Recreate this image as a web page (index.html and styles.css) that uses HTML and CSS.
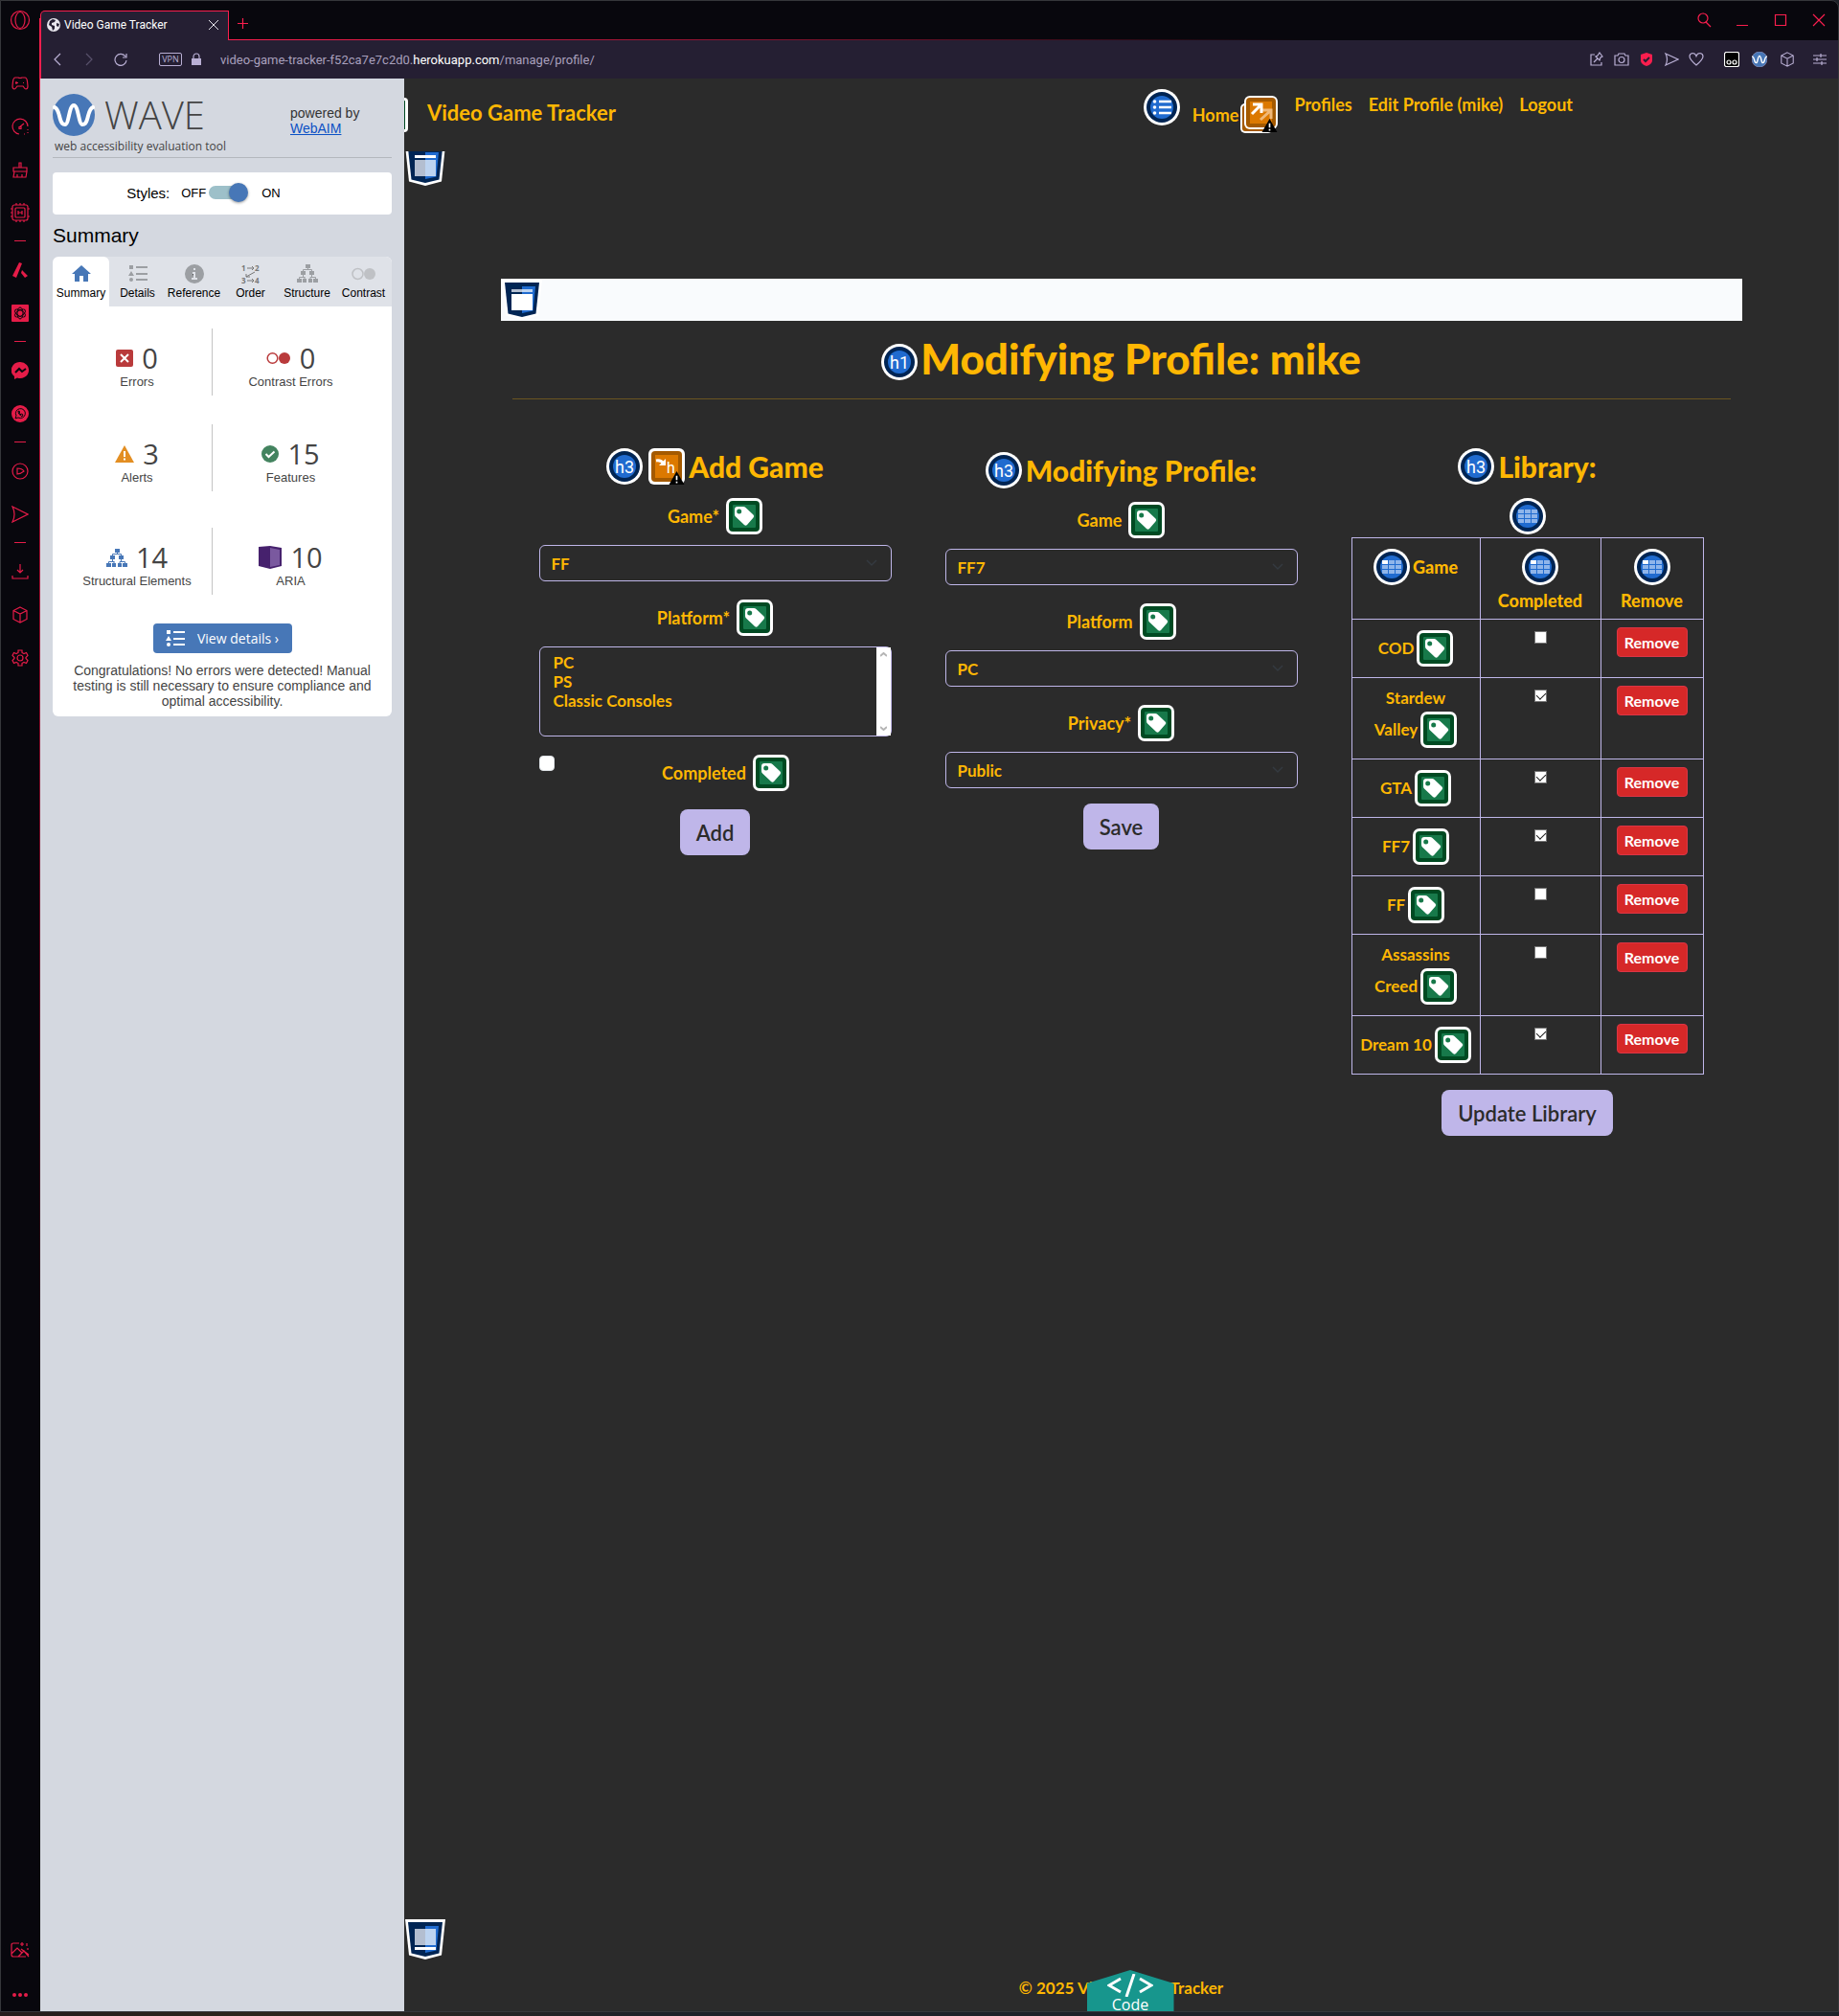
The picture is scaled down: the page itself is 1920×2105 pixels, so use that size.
FILE: index.html
```html
<!DOCTYPE html>
<html lang="en">
<head>
<meta charset="utf-8">
<meta name="viewport" content="width=device-width, initial-scale=1">
<title>Video Game Tracker</title>
<link rel="stylesheet" href="styles.css">
</head>
<body>
<svg class="sprite" aria-hidden="true">
  <symbol id="tag" viewBox="0 0 38 38"><rect width="38" height="38" rx="7" fill="#fff"/><rect x="3" y="3" width="32" height="32" rx="4" fill="#004a22"/><rect x="7" y="7" width="24" height="24" rx="1" fill="#17794a"/><path d="M9 12q0-3 3-3h6q1.500 0 2.500 1l8 7.500q1.500 1.500 0 3L22 28q-1.500 1.500-3 0l-9-8.500q-1-1-1-2.500z" fill="#fff"/><circle cx="13.700" cy="14" r="2.500" fill="#17794a"/></symbol>
  <symbol id="disc" viewBox="0 0 38 38"><circle cx="19" cy="19" r="19" fill="#fff"/><circle cx="19" cy="19" r="16" fill="#002554"/><circle cx="19" cy="19" r="12" fill="#206bcf"/></symbol>
  <symbol id="h1" viewBox="0 0 38 38"><use href="#disc"/><text x="19" y="26" text-anchor="middle" class="disc-text">h1</text></symbol>
  <symbol id="h3" viewBox="0 0 38 38"><use href="#disc"/><text x="19" y="26" text-anchor="middle" class="disc-text">h3</text></symbol>
  <symbol id="grid" viewBox="0 0 38 38"><use href="#disc"/><path fill="#8fb5ea" d="M9 12h6v4H9zM16 12h6v4h-6zM23 12h6v4h-6zM9 17h6v4H9zM16 17h6v4h-6zM23 17h6v4h-6zM9 22h6v4H9zM16 22h6v4h-6zM23 22h6v4h-6z"/></symbol>
  <symbol id="th" viewBox="0 0 38 38"><use href="#grid"/><path fill="#fff" d="M9 12h6v4H9z"/></symbol>
  <symbol id="listdisc" viewBox="0 0 38 38"><use href="#disc"/><path stroke="#fff" stroke-width="2.500" d="M16 13h13M16 19h13M16 25h13"/><g fill="#fff"><circle cx="11.500" cy="13" r="1.800"/><circle cx="11.500" cy="19" r="1.800"/><circle cx="11.500" cy="25" r="1.800"/></g></symbol>
  <symbol id="warn" viewBox="0 0 17 15"><path d="M8.500 0L17 15H0z" fill="#000"/><path d="M8.500 5v5M8.500 11.500v2" stroke="#fff" stroke-width="1.800"/></symbol>
  <symbol id="shield" viewBox="0 0 42 42"><path fill="#fff" d="M0 0h42l-4 37.500L21 42 4 37.500z"/><path fill="#002554" d="M3 3h36l-3.500 32.500L21 39 6.500 35.500z"/><path fill="#206bcf" d="M21 7h14l-2.500 25.500L21 35z"/></symbol>
  <symbol id="bullets" viewBox="0 0 20 18"><path fill="currentColor" d="M1 0h4v4H1zM3 6l3 5H0zM8 1h12v2H8zM8 8h12v2H8zM8 14h12v2H8z"/><circle cx="3" cy="15" r="2" fill="currentColor"/></symbol>
  <symbol id="tree" viewBox="0 0 22 19"><path fill="currentColor" d="M9 0h5v4H9zM4 7h5v4H4zM13 7h5v4h-5zM0 15h5v4H0zM6 15h4v4H6zM12 15h4v4h-4zM17 15h5v4h-5z"/><path fill="none" stroke="currentColor" d="M11.500 4v2M6.500 7V5.500h9V7M2.500 15v-1.500h6M6.500 11v2.500M8 15v-1.500M15.500 11v2.500M14 15v-1.500h5.500V15"/></symbol>
  <symbol id="wave" viewBox="0 0 44 44"><circle cx="22" cy="22" r="22" fill="#4777b7"/><path fill="none" stroke="#fff" stroke-width="4" stroke-linejoin="round" stroke-linecap="round" d="M2 14q3 1 5 9c2 9 4 9 6 9 4 0 4-20 9-20s5 20 9 20c2 0 4 0 6-9q2-8 5-9"/></symbol>
  <symbol id="cube" viewBox="0 0 18 18"><path d="M9 1l7 3.500v9L9 17l-7-3.500v-9zM2 4.500L9 8l7-3.500M9 8v9"/></symbol>
</svg>

<div class="window">
  <aside class="rail" aria-label="Browser sidebar">
    <button class="rail-btn rail-logo" aria-label="Menu"><svg class="line" width="22" height="22" viewBox="0 0 22 22"><circle cx="11" cy="11" r="9.500"/><ellipse cx="11" cy="11" rx="5" ry="8.500"/></svg></button>
    <button class="rail-btn" aria-label="Games"><svg class="line" width="18" height="16" viewBox="0 0 18 16"><path d="M4 2h3q2 1 4 0h3q2 0 2.500 4l.5 5q0 3-2 3-1 0-3-3H6q-2 3-3 3-2 0-2-3l.5-5Q2 2 4 2zM5 6v3M4 7.500h3M12 7.500h1"/></svg></button>
    <button class="rail-btn" aria-label="Performance"><svg class="line" width="18" height="18" viewBox="0 0 18 18"><path d="M8 17A8 8 0 1 1 17 9M8 10l5-4M8 9.500h2v2H8zM17 12v1M17 15v1M13 17h1"/></svg></button>
    <button class="rail-btn" aria-label="Cleaner"><svg class="line" width="18" height="18" viewBox="0 0 18 18"><path d="M8 7V2h2v5M2 7h14v4H2zM3 11l-1 6h13l1-6M6 14v3M11 14v3"/></svg></button>
    <button class="rail-btn" aria-label="Mods"><svg class="line" width="20" height="20" viewBox="0 0 20 20"><rect x="2" y="2" width="16" height="16" rx="2"/><rect x="5" y="5" width="10" height="10" rx="1"/><path d="M8 8v4M12 8v4M8 10h4M6 0v2M10 0v2M14 0v2M6 18v2M10 18v2M14 18v2M0 6h2M0 10h2M0 14h2M18 6h2M18 14h2"/></svg></button>
    <hr class="rail-dash">
    <button class="rail-btn" aria-label="Aria"><svg class="solid" width="18" height="18" viewBox="0 0 18 18"><path d="M8 1l3 1-6 15-4-2zM11 9l6 6-3 2-4-5z"/></svg></button>
    <button class="rail-btn" aria-label="ChatGPT"><svg width="18" height="18" viewBox="0 0 18 18"><rect width="18" height="18" rx="1" fill="#e51c48"/><g fill="none" stroke="#08070d"><ellipse cx="9" cy="9" rx="3" ry="6"/><ellipse cx="9" cy="9" rx="3" ry="6" transform="rotate(60 9 9)"/><ellipse cx="9" cy="9" rx="3" ry="6" transform="rotate(120 9 9)"/></g></svg></button>
    <hr class="rail-dash">
    <button class="rail-btn" aria-label="Messenger"><svg width="18" height="18" viewBox="0 0 18 18"><path fill="#e51c48" d="M9 0a9 8.500 0 1 1-3 16.500L3 18v-3A9 8.500 0 0 1 9 0z"/><path fill="none" stroke="#08070d" stroke-width="2" d="M4 11l4-4 3 3 4-3"/></svg></button>
    <button class="rail-btn" aria-label="WhatsApp"><svg width="18" height="18" viewBox="0 0 18 18"><circle cx="9" cy="9" r="9" fill="#e51c48"/><path fill="none" stroke="#08070d" d="M4 14l1-3a5 5 0 1 1 2 2zM7 6q-1 3 4 6l1-2-2-1-1 1-1-2 1-1z"/></svg></button>
    <hr class="rail-dash">
    <button class="rail-btn" aria-label="Player"><svg class="line" width="18" height="18" viewBox="0 0 18 18"><circle cx="9" cy="9" r="8"/><path d="M6 6q5 0 7 3-3 2.500-7 3z"/></svg></button>
    <button class="rail-btn" aria-label="My Flow"><svg class="line" width="18" height="18" viewBox="0 0 18 18"><path d="M1 1l16 8-16 8q4-8 0-16z"/></svg></button>
    <hr class="rail-dash">
    <button class="rail-btn" aria-label="Downloads"><svg class="line" width="18" height="18" viewBox="0 0 18 18"><path d="M9 1v9M6 7l3 3 3-3M1 13v3h16v-3"/></svg></button>
    <button class="rail-btn" aria-label="Extensions"><svg class="line" width="18" height="18"><use href="#cube"/></svg></button>
    <button class="rail-btn" aria-label="Settings"><svg class="line" width="18" height="18" viewBox="0 0 18 18"><circle cx="9" cy="9" r="3"/><path d="M7 1h4v2.500l2 1 2.500-1 1.500 3-2 2v1l2 2-1.500 3-2.500-1-2 1V17H7v-2.500l-2-1-2.500 1-1.500-3 2-2v-1l-2-2 1.500-3 2.500 1 2-1z"/></svg></button>
    <button class="rail-btn rail-bottom" aria-label="Wallpaper"><svg class="line" width="20" height="18" viewBox="0 0 20 18"><path d="M9 2H3Q1 2 1 4v10q0 2 2 2h13M18 7v2M1 13l6-6 5 5M8 16l6-6 5 6M12 1v4M10 3h4M17 2v3M11 8l8 6"/></svg></button>
    <button class="rail-btn rail-more" aria-label="More"><svg class="solid" width="18" height="4" viewBox="0 0 18 4"><circle cx="3" cy="2" r="2"/><circle cx="9" cy="2" r="2"/><circle cx="15" cy="2" r="2"/></svg></button>
  </aside>

  <div class="browser">
    <header class="tabstrip">
      <div class="tab">
        <svg width="14" height="14" viewBox="0 0 14 14"><circle cx="7" cy="7" r="7" fill="#e8e6ee"/><path fill="#251f33" d="M6 1l3 1-1 2-3 1v2l3 1v3l-2 2-1-4-3-2 1-4zM10 5l3 1-1 3-2-1z"/></svg>
        <span class="tab-title">Video Game Tracker</span>
        <button class="plain" aria-label="Close tab"><svg width="10" height="10" viewBox="0 0 10 10"><path d="M0 0l10 10M10 0L0 10" stroke="#e8e6ee"/></svg></button>
      </div>
      <button class="plain newtab" aria-label="New tab"><svg class="line bright" width="11" height="11" viewBox="0 0 11 11"><path d="M5.500 0v11M0 5.500h11"/></svg></button>
      <div class="win-controls">
        <button class="plain" aria-label="Search tabs"><svg class="line bright" width="16" height="16" viewBox="0 0 16 16"><circle cx="7" cy="6" r="5"/><path d="M10 10l5 5"/></svg></button>
        <button class="plain" aria-label="Minimize"><svg class="line bright" width="16" height="16" viewBox="0 0 16 16"><path d="M2 13.500h12"/></svg></button>
        <button class="plain" aria-label="Maximize"><svg class="line bright" width="16" height="16" viewBox="0 0 16 16"><path d="M2.500 2.500h11v11h-11z"/></svg></button>
        <button class="plain" aria-label="Close"><svg class="line bright" width="16" height="16" viewBox="0 0 16 16"><path d="M2 2l12 12M14 2L2 14"/></svg></button>
      </div>
    </header>

    <div class="toolbar">
      <div class="nav-btns">
        <button class="plain" aria-label="Back"><svg width="14" height="14" viewBox="0 0 14 14"><path d="M10 1L4 7l6 6"/></svg></button>
        <button class="plain dim" aria-label="Forward"><svg width="14" height="14" viewBox="0 0 14 14"><path d="M4 1l6 6-6 6"/></svg></button>
        <button class="plain" aria-label="Reload"><svg width="14" height="14" viewBox="0 0 14 14"><path d="M12 4A6 6 0 1 0 13 8M13 1v4H9"/></svg></button>
      </div>
      <span class="vpn">VPN</span>
      <svg class="lock" width="10" height="14" viewBox="0 0 10 14"><path fill="#b9afd4" stroke="none" d="M0 6h10v7H0z"/><path d="M2 6V4a3 3 0 0 1 6 0v2"/></svg>
      <div class="url">video-game-tracker-f52ca7e7c2d0.<b>herokuapp.com</b>/manage/profile/</div>
      <div class="tool-icons">
        <svg viewBox="0 0 16 16"><path d="M6 3H2v11h11v-3M5 11l4-4M7 5l4 4 1-3 2-1-3-4-2 3z"/></svg>
        <svg viewBox="0 0 16 16"><path d="M1 4h3l1-2h6l1 2h3v10H1z"/><ellipse cx="8" cy="8.500" rx="3" ry="3"/></svg>
        <svg viewBox="0 0 16 16"><path fill="#fa1e4e" stroke="none" d="M8 1l6 2v6q0 4-6 6-6-2-6-6V3z"/><path stroke="#251f33" stroke-width="2" d="M5 8l2 2 4-4"/></svg>
        <svg viewBox="0 0 16 16"><path d="M2 2l13 6-13 6q3-6 0-12z"/></svg>
        <svg viewBox="0 0 16 16"><path d="M8 14Q1 8 1 5q0-3 3-3.500 3 0 4 3 1-3 4-3 3 .5 3 3.500 0 3-7 9z"/></svg>
      </div>
      <div class="tool-icons ext">
        <svg viewBox="0 0 16 16"><rect x=".5" y=".5" width="15" height="15" rx="2" fill="#000" stroke="#fff"/><circle cx="5" cy="11" r="2" stroke="#fff"/><circle cx="11" cy="11" r="2" stroke="#fff"/></svg>
        <svg><use href="#wave"/></svg>
        <svg><use href="#cube"/></svg>
      </div>
      <svg class="tune" width="14" height="14" viewBox="0 0 14 14"><path d="M0 3h14M0 7h14M0 11h14M8 1v4M4 5v4M9 9v4"/></svg>
    </div>

    <div class="content">
      <aside class="wave">
        <div class="wave-head">
          <div>
            <div class="wave-brand"><svg width="44" height="44"><use href="#wave"/></svg><span>WAVE</span></div>
            <div class="wave-sub">web accessibility evaluation tool</div>
          </div>
          <p class="powered">powered by<br><a href="#webaim">WebAIM</a></p>
        </div>
        <div class="styles-card">
          <span>Styles:</span>
          <label class="switch"><span>OFF</span><input type="checkbox" checked><span>ON</span></label>
        </div>
        <h2 class="wave-title">Summary</h2>
        <section class="wave-card">
          <div class="wave-tabs">
            <button class="wtab active"><svg width="20" height="18" viewBox="0 0 20 18"><path fill="currentColor" d="M10 0l10 9h-3v8h-5v-6H8v6H3V9H0z"/></svg>Summary</button>
            <button class="wtab"><svg width="20" height="18"><use href="#bullets"/></svg>Details</button>
            <button class="wtab"><svg width="20" height="20" viewBox="0 0 20 20"><circle cx="10" cy="10" r="10" fill="currentColor"/><path stroke="#dfe2e8" stroke-width="2" d="M8 9h2v6M7 15h6M9 5h2"/></svg>Reference</button>
            <button class="wtab"><svg width="20" height="20" viewBox="0 0 20 20" class="order"><text x="0" y="7">1</text><text x="14" y="7">2</text><text x="0" y="20">3</text><text x="14" y="20">4</text><path d="M6 4h7M11 2l2 2-2 2M6 17h7M11 15l2 2-2 2M14 8l-9 5M5 10v3h4"/></svg>Order</button>
            <button class="wtab"><svg width="22" height="19"><use href="#tree"/></svg>Structure</button>
            <button class="wtab light"><svg width="26" height="14" viewBox="0 0 26 14"><circle cx="6.500" cy="7" r="5.500" fill="none" stroke="currentColor" stroke-width="1.500"/><circle cx="19" cy="7" r="6" fill="currentColor"/></svg>Contrast</button>
          </div>
          <div class="counts">
            <div class="count"><div><svg width="18" height="18" viewBox="0 0 18 18"><rect width="18" height="18" rx="2" fill="#b93a3b"/><path stroke="#fff" stroke-width="2" d="M5 5l8 8M13 5l-8 8"/></svg><b>0</b></div>Errors</div>
            <div class="count"><div><svg width="26" height="14" viewBox="0 0 26 14"><circle cx="6.500" cy="7" r="5.300" fill="none" stroke="#b93a3b" stroke-width="1.500"/><circle cx="19" cy="7" r="6" fill="#b93a3b"/></svg><b>0</b></div>Contrast Errors</div>
            <div class="count"><div><svg width="20" height="18" viewBox="0 0 20 18"><path fill="#e38e22" d="M10 0l10 18H0z"/><path stroke="#fff" stroke-width="2" d="M10 6v6M10 13.500v2"/></svg><b>3</b></div>Alerts</div>
            <div class="count"><div><svg width="18" height="18" viewBox="0 0 18 18"><circle cx="9" cy="9" r="9" fill="#43835f"/><path fill="none" stroke="#fff" stroke-width="2" d="M4.500 9l3 3 6-5.500"/></svg><b>15</b></div>Features</div>
            <div class="count"><div><svg class="blue" width="22" height="19"><use href="#tree"/></svg><b>14</b></div>Structural Elements</div>
            <div class="count"><div><svg width="24" height="24" viewBox="0 0 24 24"><path fill="#46216d" d="M0 1l12-1 12 2v19l-12 3L0 21z"/><path fill="#7a599f" d="M12 2l10 2v16l-10 2z"/></svg><b>10</b></div>ARIA</div>
          </div>
          <button class="view-btn"><svg width="20" height="18"><use href="#bullets"/></svg>View details ›</button>
          <p class="congrats">Congratulations! No errors were detected! Manual testing is still necessary to ensure compliance and optimal accessibility.</p>
        </section>
      </aside>

      <div class="page">
        <header class="site-head">
          <span class="cut-badge"></span>
          <a class="brand" href="#home">Video Game Tracker</a>
          <nav><ul class="menu">
            <li class="menu-disc"><svg class="ic"><use href="#listdisc"/></svg></li>
            <li class="menu-home"><a href="#home">Home</a><svg width="39" height="39" viewBox="0 0 39 39"><rect y="8" width="34" height="31" rx="5" fill="#fff"/><rect x="2" y="10" width="30" height="27" rx="3" fill="#a45a00"/><rect x="4" width="35" height="35" rx="6" fill="#fff"/><rect x="6" y="2" width="31" height="31" rx="4" fill="#a45a00"/><rect x="10" y="6" width="23" height="23" fill="#dc7900"/><path fill="none" stroke="#f0b878" stroke-width="3" d="M21 25l10-9M23 15h9v9"/><path fill="none" stroke="#fff" stroke-width="3" d="M12 19l9-9M13 9h9v9"/><use href="#warn" x="22" y="24" width="17" height="14"/></svg></li>
            <li><a href="#profiles">Profiles</a></li>
            <li><a href="#edit">Edit Profile (mike)</a></li>
            <li><a href="#logout">Logout</a></li>
          </ul></nav>
        </header>
        <main class="main">
          <svg class="landmark" width="42" height="36" viewBox="0 6 42 36"><use href="#shield" width="42" height="42"/><path fill="#fff" d="M10 10h22v3H10z"/><path fill="#b3bed0" d="M10 15h11v17H10z"/><path fill="#bcd3f0" d="M21 15h11v17H21z"/></svg>
          <div class="container">
            <div class="banner"><svg width="42" height="42" viewBox="0 0 42 42"><use href="#shield" width="42" height="42"/><path fill="#b3bed0" d="M10 10h11v3H10z"/><path fill="#bcd3f0" d="M21 10h11v3H21z"/><path fill="#fff" d="M10 15h22v17H10z"/></svg></div>
            <h1 class="title"><svg class="ic"><use href="#h1"/></svg>Modifying Profile: mike</h1>
            <div class="columns">
              <form class="col">
                <h3><svg class="ic"><use href="#h3"/></svg><svg class="ic skip" viewBox="0 0 38 38"><rect width="38" height="38" rx="6" fill="#fff"/><rect x="3" y="3" width="32" height="32" rx="4" fill="#a45a00"/><rect x="7" y="7" width="24" height="24" fill="#dc7900"/><path fill="none" stroke="#fff" stroke-width="3" d="M8 13q5-1 8 3"/><path fill="#fff" d="M18 11v7h-7z"/><text x="19" y="26" class="skip-text">h</text><use href="#warn" x="21" y="24" width="17" height="14"/></svg>Add Game</h3>
                <div class="field"><label for="g1">Game* <svg class="ic"><use href="#tag"/></svg></label><select id="g1" class="drop"><option>FF</option></select></div>
                <div class="field"><label for="p1">Platform* <svg class="ic"><use href="#tag"/></svg></label>
                  <div class="list-wrap"><select id="p1" class="listbox" multiple size="4"><option>PC</option><option>PS</option><option>Classic Consoles</option></select>
                  <span class="scroll"><svg width="7" height="5" viewBox="0 0 7 5"><path d="M0 4l3.500-3L7 4"/></svg><svg width="7" height="5" viewBox="0 0 7 5"><path d="M0 1l3.500 3L7 1"/></svg></span></div></div>
                <div class="check-row"><input type="checkbox" id="c1" class="box-lg"><label for="c1">Completed <svg class="ic"><use href="#tag"/></svg></label></div>
                <button type="button" class="btn">Add</button>
              </form>
              <form class="col mid">
                <h3><svg class="ic"><use href="#h3"/></svg>Modifying Profile:</h3>
                <div class="field"><label for="g2">Game <svg class="ic"><use href="#tag"/></svg></label><select id="g2" class="drop"><option>FF7</option></select></div>
                <div class="field"><label for="p2">Platform <svg class="ic"><use href="#tag"/></svg></label><select id="p2" class="drop"><option>PC</option></select></div>
                <div class="field last"><label for="v2">Privacy* <svg class="ic"><use href="#tag"/></svg></label><select id="v2" class="drop"><option>Public</option></select></div>
                <button type="button" class="btn">Save</button>
              </form>
              <form class="col">
                <h3><svg class="ic"><use href="#h3"/></svg>Library:</h3>
                <svg class="ic table-ic"><use href="#grid"/></svg>
                <table>
                  <colgroup><col class="c-game"><col class="c-done"><col class="c-remove"></colgroup>
                  <thead><tr><th><span><svg class="ic"><use href="#th"/></svg>Game</span></th><th><svg class="ic"><use href="#th"/></svg>Completed</th><th><svg class="ic"><use href="#th"/></svg>Remove</th></tr></thead>
                  <tbody>
                    <tr><td><label for="r1"><span>COD<svg class="ic"><use href="#tag"/></svg></span></label></td><td><input type="checkbox" id="r1" class="box"></td><td><button type="button" class="del">Remove</button></td></tr>
                    <tr><td><label for="r2" class="two">Stardew<span>Valley<svg class="ic"><use href="#tag"/></svg></span></label></td><td><input type="checkbox" id="r2" class="box" checked></td><td><button type="button" class="del">Remove</button></td></tr>
                    <tr><td><label for="r3"><span>GTA<svg class="ic"><use href="#tag"/></svg></span></label></td><td><input type="checkbox" id="r3" class="box" checked></td><td><button type="button" class="del">Remove</button></td></tr>
                    <tr><td><label for="r4"><span>FF7<svg class="ic"><use href="#tag"/></svg></span></label></td><td><input type="checkbox" id="r4" class="box" checked></td><td><button type="button" class="del">Remove</button></td></tr>
                    <tr><td><label for="r5"><span>FF<svg class="ic"><use href="#tag"/></svg></span></label></td><td><input type="checkbox" id="r5" class="box"></td><td><button type="button" class="del">Remove</button></td></tr>
                    <tr><td><label for="r6" class="two">Assassins<span>Creed<svg class="ic"><use href="#tag"/></svg></span></label></td><td><input type="checkbox" id="r6" class="box"></td><td><button type="button" class="del">Remove</button></td></tr>
                    <tr><td><label for="r7"><span>Dream 10<svg class="ic"><use href="#tag"/></svg></span></label></td><td><input type="checkbox" id="r7" class="box" checked></td><td><button type="button" class="del">Remove</button></td></tr>
                  </tbody>
                </table>
                <button type="button" class="btn">Update Library</button>
              </form>
            </div>
          </div>
        </main>
        <footer class="site-foot">
          <svg class="landmark" width="42" height="42" viewBox="0 0 42 42"><use href="#shield" width="42" height="42"/><path fill="#b3bed0" d="M10 10h11v17H10z"/><path fill="#bcd3f0" d="M21 10h11v17H21z"/><path fill="#fff" d="M10 29h22v3H10z"/></svg>
          <p>© 2025 Video Game Tracker</p>
          <button class="code-tab"><svg width="48" height="24" viewBox="0 0 48 24"><path d="M14 5L2 12l12 7M34 5l12 7-12 7M28 0l-8 24"/></svg>Code</button>
        </footer>
      </div>
    </div>
  </div>
</div>
</body>
</html>
```
FILE: styles.css
```css
* { box-sizing: border-box; }
body { margin: 0; background: linear-gradient(90deg, #241c1c, #2d261c 14%, #1e2128 35%); font-family: "Liberation Sans", Arial, sans-serif; }
button { font: inherit; cursor: pointer; }
h1, h2, h3, p, ul { margin: 0; padding: 0; font-weight: inherit; }
.sprite { position: absolute; width: 0; height: 0; }
svg { flex: none; display: block; }

.window { display: flex; min-height: calc(100vh - 4px); margin-bottom: 4px; border: 1px solid #36373b; background: #08070d; border-radius: 0 8px 0 0; overflow: hidden; }
.browser { flex: 1; min-width: 0; display: flex; flex-direction: column; }

/* Browser side rail */
.rail { width: 41px; flex: none; display: flex; flex-direction: column; background: linear-gradient(#fa1e4e, #a01535 30%, transparent 70%) right 18px / 1px 100% no-repeat; padding-right: 2px; }
.rail-btn { border: 0; padding: 0; background: none; height: 45px; flex: none; display: flex; align-items: center; justify-content: center; }
.rail-logo { height: 40px; margin-bottom: 23px; }
.rail-dash { width: 12px; height: 1px; margin: 7px auto; border: 0; background: #e51c48; flex: none; }
.rail-bottom { margin-top: auto; }
.rail-more { height: 50px; margin-bottom: -8px; }
.line { fill: none; stroke: #e51c48; stroke-width: 1.2px; }
.solid { fill: #e51c48; }
.bright { stroke: #fa1e4e; }
.plain { border: 0; background: none; padding: 0; display: flex; }

/* Tab strip */
.tabstrip { height: 41px; display: flex; align-items: flex-end; background: linear-gradient(90deg, #fa1e4e, transparent 60%) 196px bottom / 100% 1px no-repeat; }
.tab { width: 197px; height: 31px; display: flex; align-items: center; gap: 4px; padding: 0 10px 2px 6px; background: #251f33; border: 1px solid #fa1e4e; border-width: 1px 1px 0 1px; border-radius: 5px 0 0 0; color: #fff; }
.tab-title { font: 12px Roboto, sans-serif; flex: 1; white-space: nowrap; }
.newtab { padding: 0 9px 12px; }
.win-controls { display: flex; gap: 24px; margin-left: auto; padding: 0 12px 13px 0; }

.toolbar { height: 40px; flex: none; display: flex; align-items: center; background: #251f33; border-left: 1px solid #fa1e4e; padding: 0 12px 0 10px; }
.toolbar svg { fill: none; stroke: #b9afd4; stroke-width: 1.2px; }
.nav-btns { display: flex; gap: 19px; }
.dim { opacity: .35; }
.vpn { margin-left: 33px; border: 1px solid #b9afd4; border-radius: 2px; width: 24px; height: 14px; font: 9px/12px "Open Sans", sans-serif; text-align: center; color: #b9afd4; }
.lock { margin: 0 20px 0 10px; }
.url { flex: 1; font: 13px Roboto, sans-serif; color: #a9a0bd; white-space: nowrap; }
.url b { font-weight: 400; color: #fff; }
.tool-icons { display: flex; gap: 10px; }
.tool-icons svg { width: 16px; height: 16px; }
.ext { gap: 13px; margin: 0 19px 0 21px; }

.content { flex: 1; display: flex; }

/* Evaluation panel */
.wave { width: 380px; flex: none; background: #d4d8e0; padding: 15px 13px; color: #000; }
.wave-head { display: flex; border-bottom: 1px solid #b3b8bd; height: 68px; }
.wave-brand { display: flex; align-items: center; gap: 10px; height: 46px; font: 300 40px/44px "Open Sans", sans-serif; color: #444; }
.wave-sub { font: 12px/20px "Open Sans", sans-serif; color: #444; padding-left: 2px; }
.powered { margin-left: auto; width: 106px; padding-top: 13px; font-size: 14px; line-height: 16px; color: #333; }
.powered a { color: #0b51c5; }
.styles-card { margin-top: 15px; height: 44px; background: #fff; border-radius: 4px; display: flex; align-items: center; justify-content: center; gap: 12px; font-size: 15px; padding: 0 39px 2px 0; }
.switch { display: flex; align-items: center; gap: 3px; font-size: 13px; }
.switch input { appearance: none; width: 38px; height: 14px; margin: 0 14px 0 0; border-radius: 7px; background: #9dc0c9; position: relative; }
.switch input::after { content: ""; position: absolute; right: -3px; top: -3px; width: 20px; height: 20px; border-radius: 50%; background: #4777b7; box-shadow: 0 1px 3px #0006; }
.wave-title { font-size: 21px; line-height: 24px; margin: 10px 0 10px; }
.wave-card { background: #fff; border-radius: 6px; overflow: hidden; text-align: center; padding-bottom: 8px; }
.wave-tabs { display: grid; grid-template-columns: repeat(6, 1fr); background: #dfe2e8; height: 52px; }
.wtab { border: 0; background: none; padding: 7px 0 5px; display: grid; grid-template-rows: 21px 19px; justify-items: center; align-items: center; font-size: 12px; color: #000; }
.wtab svg { color: #9c9fa3; }
.wtab.active { background: #fff; border-radius: 6px 6px 0 0; }
.wtab.active svg { color: #4777b7; }
.wtab.light svg { color: #bfc1c5; }
.order { fill: none; stroke: #777; }
.order text { font: 700 8px "Open Sans", sans-serif; fill: #777; stroke: none; }
.counts { display: grid; grid-template-columns: 167px 1fr; row-gap: 30px; padding: 23px 0 0; }
.count { height: 70px; font-size: 13px; line-height: 16px; color: #444; padding-right: 24px; padding-top: 14px; }
.count:nth-child(odd) { border-right: 1px solid #c4c4c4; padding: 14px 0 0 10px; }
.count:nth-child(n+5) { margin-top: 8px; height: 70px; }
.count div { display: flex; align-items: center; justify-content: center; gap: 9px; height: 34px; }
.count b { font: 29px/34px "Open Sans", sans-serif; }
.blue { color: #4777b7; }
.counts { grid-auto-rows: 70px; }
.view-btn { margin: 38px auto 13px; width: 145px; height: 31px; border: 0; border-radius: 4px; background: #4777b7; color: #fff; font: 14px "Open Sans", sans-serif; display: flex; align-items: center; justify-content: center; gap: 13px; }
.congrats { font-size: 14px; line-height: 16px; padding: 0 16px; color: #444; margin-top: -3px; }

/* Tracked site */
.page { flex: 1; min-width: 0; display: flex; flex-direction: column; background: #2b2b2b; color: #ffb703; font-family: Lato, "Open Sans", sans-serif; font-size: 18px; font-weight: 700; position: relative; }
.page a { color: inherit; text-decoration: none; }
.ic { width: 38px; height: 38px; }
.disc-text { font: 18px Roboto, sans-serif; fill: #fff; }
.skip-text { font: 16px Roboto, sans-serif; fill: #fff; }
.site-head { height: 76px; display: flex; align-items: flex-start; justify-content: space-between; padding-right: 277px; }
.cut-badge { position: absolute; left: 0; top: 20px; width: 4px; height: 36px; border: solid #fff; border-width: 3px 3px 3px 0; border-radius: 0 6px 6px 0; background: #004a22; }
.brand { margin-left: 24px; padding-top: 22px; font-size: 22px; line-height: 28px; }
.menu { list-style: none; display: flex; gap: 17px; line-height: 24px; padding-top: 15px; }
.menu-disc { margin: -4px -4px 0 0; }
.menu-home { display: flex; align-items: center; gap: 2px; padding-top: 3px; }
.main { flex: 1; position: relative; padding: 0 88px; }
.landmark { position: absolute; left: 1px; top: 0; }
.container { max-width: 1320px; margin: 0 auto; padding: 133px 12px 0; }
.banner { height: 44px; background: #f9fbfd; padding: 1px; }
.title { display: flex; align-items: center; justify-content: center; gap: 3px; font-size: 44px; line-height: 48px; margin: 0 12px; padding: 15px 0 18px; border-bottom: 1px solid #6a5520; font-weight: 900; }
.title .ic { margin-top: 7px; }
.columns { display: grid; grid-template-columns: repeat(3, 1fr); padding: 51px 12px 0; }
.col { padding: 0 28px; display: flex; flex-direction: column; align-items: center; }
.col.mid { padding-top: 4px; }
.col h3 { display: flex; align-items: center; gap: 4px; font-size: 30px; line-height: 38px; font-weight: 900; margin-bottom: 14px; white-space: nowrap; }
.col .skip { margin-left: 2px; }
.field { width: 100%; display: flex; flex-direction: column; align-items: center; gap: 11px; margin-bottom: 19px; }
.field.last { margin-bottom: 16px; }
.field label, .check-row label { display: flex; align-items: center; gap: 7px; height: 38px; }
.drop, .listbox { width: 100%; border: 1px solid #bfb6e9; border-radius: 6px; background: none; color: inherit; font: inherit; font-size: 17px; outline: 0; }
.drop { appearance: none; height: 38px; padding: 0 12px; background: url('data:image/svg+xml,<svg xmlns="http://www.w3.org/2000/svg" viewBox="0 0 12 8"><path d="M1 1l5 5 5-5" fill="none" stroke="%23343a40" stroke-width="1.500"/></svg>') right 14px center / 12px 8px no-repeat; }
.list-wrap { width: 100%; position: relative; }
.listbox { display: block; height: 94px; padding: 5px 12px; overflow: hidden; }
.listbox option { min-height: 0; height: 20px; font-size: 17px; font-weight: 700; line-height: 20px; padding: 0 2px; }
.scroll { position: absolute; right: 1px; top: 1px; bottom: 1px; width: 15px; background: #fff; display: flex; flex-direction: column; justify-content: space-between; align-items: center; padding: 5px 0; }
.scroll svg { fill: none; stroke: #b5b5b5; stroke-width: 2; }
.check-row { width: 100%; display: grid; grid-template-columns: 16px 1fr; margin-bottom: 19px; }
.check-row label { justify-content: center; padding-left: 6px; }
.box-lg { appearance: none; width: 16px; height: 16px; margin: 1px 0 0; border-radius: 4px; background: #fff; border: 1px solid #dee2e6; }
.btn { height: 48px; border: 0; border-radius: 8px; background: #bfb6e9; color: #2b2b2b; font-size: 22px; font-weight: 600; padding: 0 17px; }
.table-ic { margin-bottom: 3px; }
table { width: 100%; border-collapse: collapse; table-layout: fixed; text-align: center; margin-bottom: 16px; font-size: 17px; line-height: 32px; }
.c-game { width: 134px; }
.c-done { width: 126px; }
th, td { border: 1px solid #bfb6e9; padding: 0; vertical-align: top; }
th { font-size: 18px; font-weight: 900; padding: 11px 4px 3px; }
th .ic { margin: 0 auto; }
td label { display: block; padding: 11px 0; }
td .two { padding-top: 7px; line-height: 28px; }
td label span, th span { display: flex; justify-content: center; align-items: center; gap: 3px; height: 38px; }
th span .ic { margin: 0; }
tbody tr { height: 61px; }
.box { appearance: none; display: block; position: relative; width: 13px; height: 13px; margin: 12px auto 0; background: #fff; border: 1px solid #767676; }
.box:checked::after { content: ""; position: absolute; left: 3px; top: 0; width: 5px; height: 8px; border: solid #222; border-width: 0 1px 1px 0; transform: rotate(45deg); }
.del { display: block; width: 74px; height: 31px; margin: 8px auto 0; border: 1px solid #dc3545; border-radius: 4px; background: #d62828; color: #fff; font-size: 16px; line-height: 20px; padding: 0; }
.site-foot { height: 96px; position: relative; text-align: center; font-size: 17px; line-height: 24px; padding-top: 60px; }
.code-tab { position: absolute; left: calc(50% - 36px); bottom: 0; width: 91px; height: 43px; border: 0; padding: 4px 0 0; background: #17968d; clip-path: polygon(0 14px, 50% 0, 100% 14px, 100% 100%, 0 100%); color: #fff; font: 16px/16px "Open Sans", sans-serif; display: flex; flex-direction: column; align-items: center; }
.code-tab svg { fill: none; stroke: #fff; stroke-width: 3; }
```
